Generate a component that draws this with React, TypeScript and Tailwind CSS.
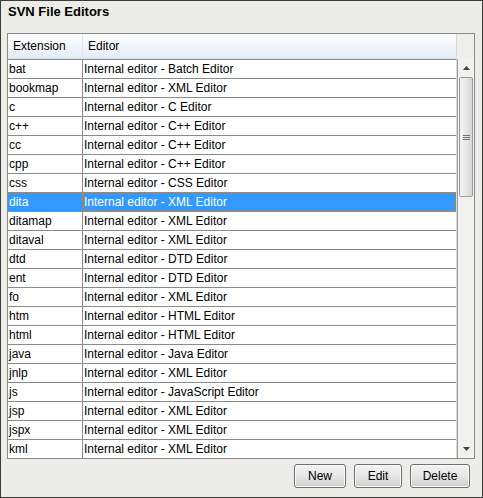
const rows: [string, string][] = [
  ["bat", "Internal editor - Batch Editor"],
  ["bookmap", "Internal editor - XML Editor"],
  ["c", "Internal editor - C Editor"],
  ["c++", "Internal editor - C++ Editor"],
  ["cc", "Internal editor - C++ Editor"],
  ["cpp", "Internal editor - C++ Editor"],
  ["css", "Internal editor - CSS Editor"],
  ["dita", "Internal editor - XML Editor"],
  ["ditamap", "Internal editor - XML Editor"],
  ["ditaval", "Internal editor - XML Editor"],
  ["dtd", "Internal editor - DTD Editor"],
  ["ent", "Internal editor - DTD Editor"],
  ["fo", "Internal editor - XML Editor"],
  ["htm", "Internal editor - HTML Editor"],
  ["html", "Internal editor - HTML Editor"],
  ["java", "Internal editor - Java Editor"],
  ["jnlp", "Internal editor - XML Editor"],
  ["js", "Internal editor - JavaScript Editor"],
  ["jsp", "Internal editor - XML Editor"],
  ["jspx", "Internal editor - XML Editor"],
  ["kml", "Internal editor - XML Editor"],
];

const Button = ({ label, w }: { label: string; w: string }) => (
  <button
    className={`${w} h-[24px] rounded-[3px] border border-[#707070] bg-gradient-to-b from-[#f2f2f2] via-[#e6e6e6] to-[#d0d0d0] text-[12px] text-black shadow-[inset_0_0_0_1px_#fcfcfc]`}
  >
    {label}
  </button>
);

export default function App() {
  return (
    <div
      className="w-[483px] h-[498px] border border-[#3c3c3c] bg-[#ecede9] flex flex-col text-black"
      style={{ fontFamily: "Tahoma, 'Liberation Sans', sans-serif" }}
    >
      <div className="h-[32px] pl-[7px] pt-[1px] text-[13px] font-bold">SVN File Editors</div>

      {/* table */}
      <div className="ml-[6px] mr-[7px] h-[426px] border border-[#8b8b8b] flex overflow-hidden">
        <div className="flex-1 flex flex-col overflow-hidden">
          <div className="h-[25px] flex shrink-0 bg-gradient-to-b from-white to-[#e4ecf5] border-b border-[#d5dfe5] text-[12px]">
            <div className="w-[75px] pl-[5px] flex items-center border-r border-[#e1e6ea]">Extension</div>
            <div className="flex-1 pl-[5px] flex items-center">Editor</div>
          </div>
          <div className="flex flex-col text-[12px] bg-white border-t border-[#8b8b8b]">
            {rows.map(([ext, ed]) => {
              const sel = ext === "dita";
              return (
                <div
                  key={ext}
                  className={`h-[19px] flex shrink-0 border-b border-[#8b8b8b] ${sel ? "bg-[#3399ff] text-white" : ""}`}
                >
                  <div className="w-[75px] pl-[1px] flex items-center border-r border-[#8b8b8b]">{ext}</div>
                  <div
                    className={`flex-1 pl-[1px] flex items-center ${sel ? "outline-1 outline-dotted outline-[#c77a2a] -outline-offset-1" : ""}`}
                  >
                    {ed}
                  </div>
                </div>
              );
            })}
          </div>
        </div>
        {/* scrollbar */}
        <div className="w-[18px] flex flex-col shrink-0 bg-[#eeeeec] border-l border-[#d8d8d8]">
          <div className="h-[25px] shrink-0 bg-[#eeeeec]" />
          <div className="flex-1 flex flex-col bg-[#f1f1f0] border-l border-[#a0a0a0]">
            <div className="h-[18px] flex items-center justify-center shrink-0">
              <svg width="7" height="4" viewBox="0 0 7 4"><path d="M3.5 0 L7 4 L0 4 Z" fill="#404040" /></svg>
            </div>
            <div className="mx-[1px] h-[120px] rounded-[2px] border border-[#9a9a9a] bg-gradient-to-r from-[#f4f4f4] via-[#e8e8e8] to-[#d6d6d6] flex items-center justify-center">
              <div className="flex flex-col gap-[1px]">
                <div className="w-[7px] h-[1px] bg-[#707070]" />
                <div className="w-[7px] h-[1px] bg-[#707070]" />
                <div className="w-[7px] h-[1px] bg-[#707070]" />
              </div>
            </div>
            <div className="flex-1" />
            <div className="h-[18px] flex items-center justify-center shrink-0">
              <svg width="7" height="4" viewBox="0 0 7 4"><path d="M0 0 L7 0 L3.5 4 Z" fill="#404040" /></svg>
            </div>
          </div>
        </div>
      </div>

      <div className="flex justify-end gap-[8px] pr-[12px] pt-[5px]">
        <Button label="New" w="w-[52px]" />
        <Button label="Edit" w="w-[48px]" />
        <Button label="Delete" w="w-[60px]" />
      </div>
    </div>
  );
}
